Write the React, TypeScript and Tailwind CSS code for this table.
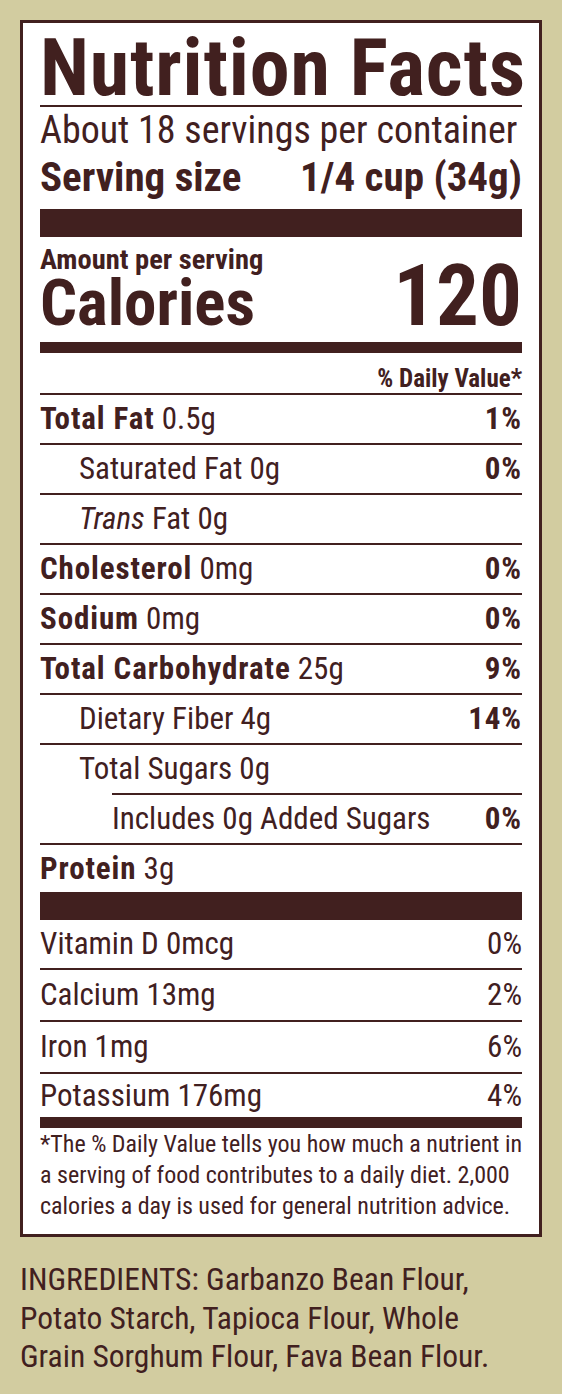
type Row = {
  bold?: string;
  italic?: string;
  text: string;
  dv?: string;
  indent?: "one" | "two";
};

const rows: Row[] = [
  { bold: "Total Fat", text: " 0.5g", dv: "1%" },
  { text: "Saturated Fat 0g", dv: "0%", indent: "one" },
  { italic: "Trans", text: " Fat 0g", indent: "one" },
  { bold: "Cholesterol", text: " 0mg", dv: "0%" },
  { bold: "Sodium", text: " 0mg", dv: "0%" },
  { bold: "Total Carbohydrate", text: " 25g", dv: "9%" },
  { text: "Dietary Fiber 4g", dv: "14%", indent: "one" },
  { text: "Total Sugars 0g", indent: "one" },
  { text: "Includes 0g Added Sugars", dv: "0%", indent: "two" },
];

const vitamins = [
  { text: "Vitamin D 0mcg", dv: "0%", h: "h-[50px] border-b-2" },
  { text: "Calcium 13mg", dv: "2%", h: "h-[52px] border-b-2" },
  { text: "Iron 1mg", dv: "6%", h: "h-[52px] border-b-2" },
  { text: "Potassium 176mg", dv: "4%", h: "h-[43px]" },
];

const footnote = [
  "*The % Daily Value tells you how much a nutrient in",
  "a serving of food contributes to a daily diet. 2,000",
  "calories a day is used for general nutrition advice.",
];

const ingredients = [
  "INGREDIENTS: Garbanzo Bean Flour,",
  "Potato Starch, Tapioca Flour, Whole",
  "Grain Sorghum Flour, Fava Bean Flour.",
];

function NutrientRow({ row }: { row: Row }) {
  const pad = row.indent === "one" ? "pl-[39px]" : row.indent === "two" ? "pl-[72px]" : "";
  // the rule under Total Sugars only starts at the Added Sugars indent
  const isSugars = row.text.startsWith("Total Sugars");
  return (
    <>
      <div
        className={`flex items-center justify-between pb-[1px] text-[31px] leading-none ${pad} ${
          isSugars ? "h-[48px]" : "h-[50px] border-b-2 border-[#41201f]"
        }`}
      >
        <span>
          {row.bold && <span className="font-bold tracking-[0.9px]">{row.bold}</span>}
          {row.italic && <span className="italic">{row.italic}</span>}
          {row.text}
        </span>
        {row.dv && <span className="font-bold tracking-[0.9px]">{row.dv}</span>}
      </div>
      {isSugars && <div className="ml-[72px] h-[2px] bg-[#41201f]" />}
    </>
  );
}

export default function App() {
  return (
    <div className="min-h-[1394px] w-[562px] bg-[#d2cca0] px-[20px] pt-[20px] font-['Roboto_Condensed','Liberation_Sans',sans-serif] text-[#41201f]">
      <div className="border-[3px] border-[#41201f] bg-white px-[17px] pt-[8px] pb-[12px]">
        <h1 className="border-b-2 border-[#41201f] text-[80px] font-bold leading-[74px] tracking-[0.8px] whitespace-nowrap">
          Nutrition Facts
        </h1>
        <p className="mt-[4px] text-[38px] leading-[38px] whitespace-nowrap">
          About 18 servings per container
        </p>
        <div className="mt-[7px] flex justify-between text-[41px] font-bold leading-[42px]">
          <span>Serving size</span>
          <span>1/4 cup (34g)</span>
        </div>
        <div className="mt-[11px] h-[28px] bg-[#41201f]" />

        <div className="flex items-end justify-between">
          <div>
            <div className="mt-[9px] text-[28.5px] font-bold leading-[28px]">Amount per serving</div>
            <div className="mt-[4px] text-[65px] font-bold leading-[50px]">Calories</div>
          </div>
          <div className="text-[85px] font-bold leading-[64px]">120</div>
        </div>
        <div className="mt-[14px] h-[11px] bg-[#41201f]" />

        <div className="flex h-[42px] items-end justify-end border-b-2 border-[#41201f] pb-[2px] text-[25px] font-bold leading-none">
          % Daily Value*
        </div>

        {rows.map((row, i) => (
          <NutrientRow key={i} row={row} />
        ))}

        <div className="flex h-[47px] items-center pb-[1px] text-[31px] leading-none">
          <span>
            <span className="font-bold tracking-[0.9px]">Protein</span> 3g
          </span>
        </div>
        <div className="h-[28px] bg-[#41201f]" />

        {vitamins.map((v) => (
          <div
            key={v.text}
            className={`flex items-center justify-between border-[#41201f] pb-[1px] text-[31px] leading-none ${v.h}`}
          >
            <span>{v.text}</span>
            <span>{v.dv}</span>
          </div>
        ))}
        <div className="h-[11px] bg-[#41201f]" />

        <div className="pt-[1px] text-[24px] leading-[31px]">
          {footnote.map((line) => (
            <div key={line} className="whitespace-nowrap">
              {line}
            </div>
          ))}
        </div>
      </div>

      <div className="mt-[24px] text-[31.5px] leading-[38.5px]">
        {ingredients.map((line) => (
          <div key={line} className="whitespace-nowrap">
            {line}
          </div>
        ))}
      </div>
    </div>
  );
}
